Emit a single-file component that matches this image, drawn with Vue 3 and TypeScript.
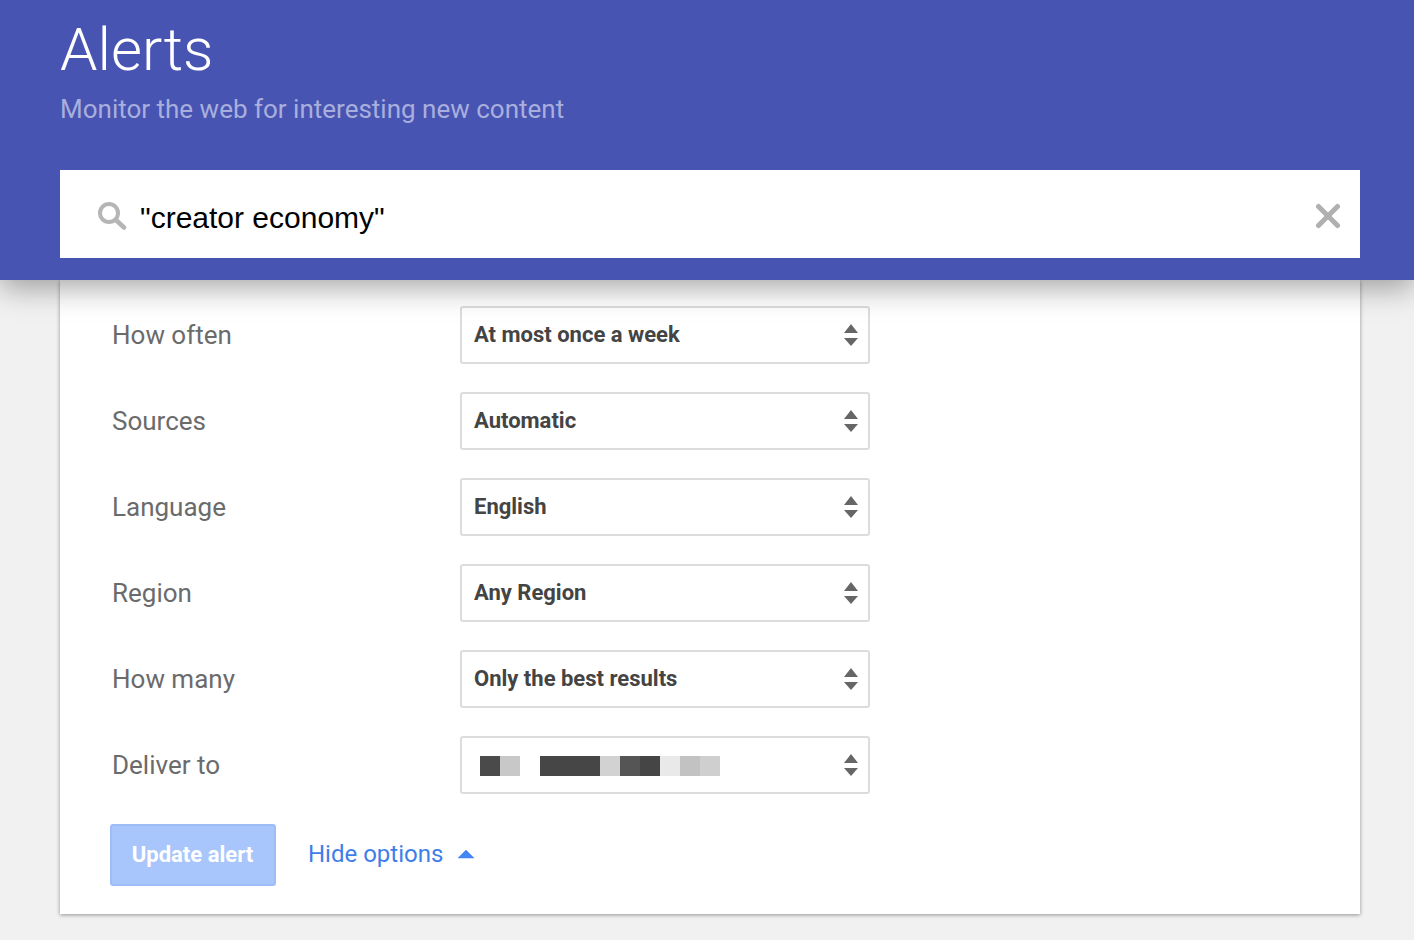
<script setup lang="ts">
interface Row { label: string; value: string; masked?: boolean }
const rows: Row[] = [
  { label: 'How often', value: 'At most once a week' },
  { label: 'Sources', value: 'Automatic' },
  { label: 'Language', value: 'English' },
  { label: 'Region', value: 'Any Region' },
  { label: 'How many', value: 'Only the best results' },
  { label: 'Deliver to', value: '', masked: true },
]
const blocks: string[] = ['#4a4a4a', '#c8c8c8', '#ffffff', '#464646', '#464646', '#464646', '#d2d2d2', '#555555', '#454545', '#e9e9e9', '#c2c2c2', '#cfcfcf']
</script>

<template>
  <div class="page">
    <header class="header">
      <div class="titles">
        <h1 class="title">Alerts</h1>
        <p class="subtitle">Monitor the web for interesting new content</p>
      </div>
      <div class="search">
        <svg class="search-icon" width="30" height="30" viewBox="0 0 30 30" aria-hidden="true">
          <circle cx="12" cy="13" r="9" fill="none" stroke="#b5b5b5" stroke-width="4" />
          <path d="M19 20l8 7.500" stroke="#b5b5b5" stroke-width="4.500" stroke-linecap="round" />
        </svg>
        <span class="query">"creator economy"</span>
        <svg class="clear-icon" width="26" height="26" viewBox="0 0 26 26" aria-hidden="true">
          <path d="M3.500 3.500l19 19M22.500 3.500l-19 19" stroke="#b0b0b0" stroke-width="5" stroke-linecap="round" />
        </svg>
      </div>
    </header>
    <main class="card">
      <div v-for="row in rows" :key="row.label" class="row">
        <span class="label">{{ row.label }}</span>
        <div class="select">
          <span v-if="!row.masked" class="value">{{ row.value }}</span>
          <span v-else class="mask">
            <i v-for="(c, i) in blocks" :key="i" class="block" :style="{ background: c }"></i>
          </span>
          <svg class="stepper" width="14" height="22" viewBox="0 0 14 22" aria-hidden="true">
            <path d="M7 0l7 9H0z" fill="#666" />
            <path d="M0 14h14l-7 8z" fill="#666" />
          </svg>
        </div>
      </div>
      <div class="actions">
        <button class="update" type="button"><span class="update-text">Update alert</span></button>
        <span class="hide">Hide options</span>
        <svg class="caret" width="18" height="10" viewBox="0 0 18 10" aria-hidden="true">
          <path d="M9 1l8 8H1z" fill="#4285f4" stroke="#4285f4" stroke-width="0.5" stroke-linejoin="round" />
        </svg>
      </div>
    </main>
  </div>
</template>

<style>
html, body { margin: 0; background: #f1f1f1; }
</style>

<style scoped>
.page {
  position: relative;
  height: 940px;
  overflow: hidden;
  background: #f1f1f1;
  font-family: Roboto, "Liberation Sans", sans-serif;
}
.header {
  position: relative;
  z-index: 2;
  height: 280px;
  box-sizing: border-box;
  background: #4854b2;
  padding: 0 54px 0 60px;
  box-shadow: 0 8px 28px rgba(0, 0, 0, 0.35);
}
.titles { height: 170px; }
.title {
  margin: 0;
  padding-top: 15px;
  font-size: 60px;
  line-height: 70px;
  font-weight: 300;
  color: #fff;
}
.subtitle {
  margin: 0;
  padding-top: 7px;
  font-size: 26px;
  line-height: 34px;
  color: #a9afdd;
}
.search {
  display: flex;
  align-items: center;
  height: 88px;
  background: #fff;
  padding: 0 19px 0 37px;
}
.search-icon { flex: none; margin-top: 2px; }
.query {
  flex: 1;
  margin-left: 13px;
  margin-top: 8px;
  font-family: "Liberation Sans", Arial, sans-serif;
  font-size: 30px;
  color: #000;
}
.clear-icon { flex: none; margin-top: 3px; }
.card {
  margin: 0 54px 0 60px;
  height: 634px;
  box-sizing: border-box;
  background: #fff;
  padding: 26px 0 0 50px;
  box-shadow: 0 1px 4px rgba(0, 0, 0, 0.4);
}
.row {
  display: flex;
  align-items: center;
  height: 58px;
  margin-bottom: 28px;
}
.label {
  width: 350px;
  padding-left: 2px;
  box-sizing: border-box;
  font-size: 26px;
  color: #6b6b6b;
}
.select {
  display: flex;
  align-items: center;
  justify-content: space-between;
  width: 410px;
  height: 58px;
  box-sizing: border-box;
  border: 2px solid #dcdcdc;
  border-radius: 3px;
  padding: 0 10px 0 12px;
}
.value {
  margin-bottom: 2px;
  font-size: 22px;
  font-weight: 700;
  color: #444;
}
.mask { display: flex; margin-left: 6px; margin-top: 2px; }
.block { display: block; width: 20px; height: 20px; }
.stepper { flex: none; }
.actions {
  display: flex;
  align-items: center;
  padding-top: 2px;
  height: 62px;
}
.update {
  width: 166px;
  height: 62px;
  box-sizing: border-box;
  border: 2px solid #9dbdf7;
  border-radius: 3px;
  background: #a8c6fb;
  color: #fff;
  font-family: inherit;
  font-size: 22px;
  font-weight: 700;
  padding: 0 0 2px;
}
.update-text { margin-left: -1px; }
.hide {
  margin-left: 32px;
  margin-bottom: 2px;
  font-size: 24px;
  color: #3f7ee8;
}
.caret { margin-left: 14px; margin-bottom: 2px; }
</style>
